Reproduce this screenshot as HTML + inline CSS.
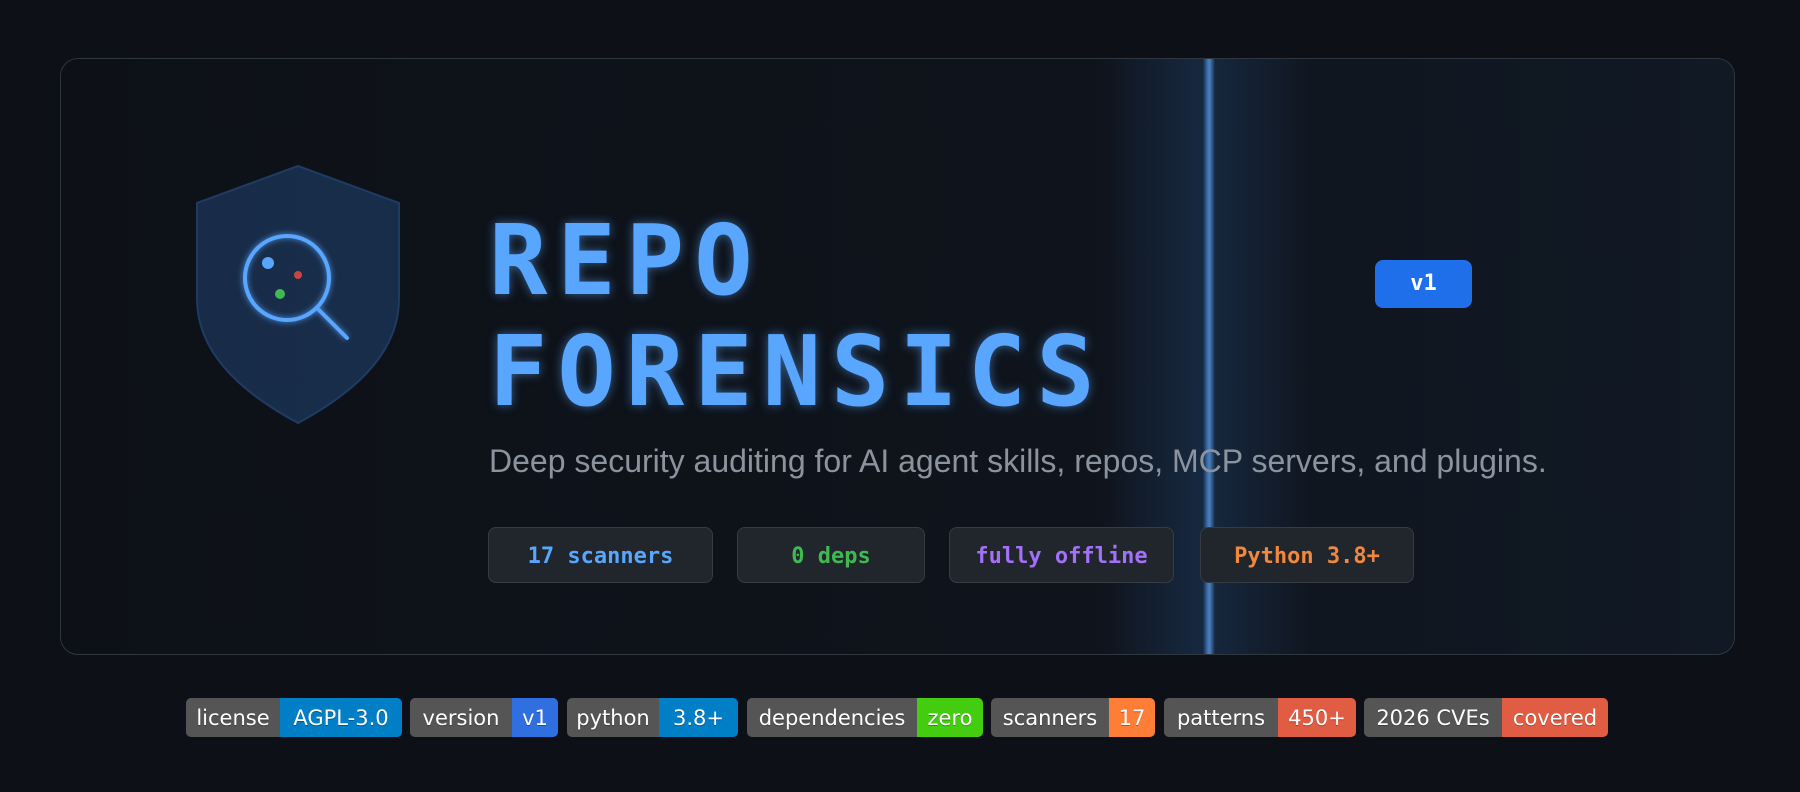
<!DOCTYPE html>
<html><head><meta charset="utf-8">
<style>
html,body{margin:0;padding:0;background:#0d1117;width:1800px;height:792px;overflow:hidden;font-family:"Liberation Sans",sans-serif}
.card{position:absolute;left:60px;top:58px;width:1673px;height:595px;border:1px solid #30363d;border-radius:18px;background:linear-gradient(90deg,#0d1117 0%,#0f141c 60%,#111925 100%);overflow:hidden}
.beam{position:absolute;left:1042px;top:0;width:210px;height:100%;background:linear-gradient(90deg,rgba(30,60,100,0) 0%,rgba(30,60,100,.3) 28%,rgba(30,60,100,.5) 48%,rgba(30,60,100,.3) 68%,rgba(30,60,100,0) 100%)}
.beamc{position:absolute;left:1142px;top:0;width:12px;height:100%;background:linear-gradient(90deg,rgba(70,130,200,0),#3f74b4 40%,#4a80c0 55%,rgba(70,130,200,0))}
.title{position:absolute;left:428px;top:146px;font-family:"DejaVu Sans Mono",monospace;font-weight:bold;font-size:97px;line-height:111px;letter-spacing:10px;color:#58a6ff;text-shadow:0 0 10px rgba(88,166,255,.55)}
.v1{position:absolute;left:1314px;top:201px;width:97px;height:48px;border-radius:8px;background:#1f6feb;color:#fff;font-family:"DejaVu Sans Mono",monospace;font-weight:bold;font-size:22px;line-height:48px;text-align:center}
.sub{position:absolute;left:428px;top:384px;font-size:32px;color:#8b949e;white-space:nowrap}
.pill{position:absolute;top:468px;height:56px;border:1px solid #363c45;border-radius:8px;background:#21262d;font-family:"DejaVu Sans Mono",monospace;font-weight:bold;font-size:22px;line-height:58px;text-align:center;box-sizing:border-box}
.b{position:absolute;top:0;height:39px;border-radius:5px;overflow:hidden;display:flex;font-family:"DejaVu Sans",sans-serif;font-size:21px;color:#fff;line-height:40px;text-shadow:0 1px 0 rgba(0,0,0,.3)}
.b span{display:block;text-align:center}
.l{background:#555}
</style></head><body>
<div class="card">
<div class="beam"></div><div class="beamc"></div>
<svg style="position:absolute;left:0;top:0" width="420" height="420">
<defs><filter id="g"><feGaussianBlur stdDeviation="3"/></filter></defs>
<path d="M237 107 L338 144 L338 240 C338 290 300 330 237 364 C174 330 136 290 136 240 L136 144 Z" fill="#1a3050" stroke="#22406a" stroke-width="2" opacity=".9"/>
<g filter="url(#g)" opacity=".7"><circle cx="226" cy="219" r="42" fill="none" stroke="#58a6ff" stroke-width="5"/><line x1="257" y1="250" x2="286" y2="279" stroke="#58a6ff" stroke-width="5"/></g>
<circle cx="226" cy="219" r="42" fill="none" stroke="#58a6ff" stroke-width="4"/>
<line x1="257" y1="250" x2="286" y2="279" stroke="#58a6ff" stroke-width="4" stroke-linecap="round"/>
<circle cx="207" cy="204" r="6" fill="#58a6ff"/>
<circle cx="237" cy="216" r="4" fill="#c9463e"/>
<circle cx="219" cy="235" r="5" fill="#3fb950"/>
</svg>
<div class="title">REPO<br>FORENSICS</div>
<div class="v1">v1</div>
<div class="sub">Deep security auditing for AI agent skills, repos, MCP servers, and plugins.</div>
<div class="pill" style="left:427px;width:225px;color:#58a6ff">17 scanners</div>
<div class="pill" style="left:676px;width:188px;color:#3fb950">0 deps</div>
<div class="pill" style="left:888px;width:225px;color:#a371f7">fully offline</div>
<div class="pill" style="left:1139px;width:214px;color:#f0883e">Python 3.8+</div>
</div>
<div class="b" style="left:186px;width:216px;top:698px"><span class="l" style="width:94px">license</span><span style="flex:1;background:#007ec6">AGPL-3.0</span></div>
<div class="b" style="left:410px;width:148px;top:698px"><span class="l" style="width:102px">version</span><span style="flex:1;background:#2f6fe0">v1</span></div>
<div class="b" style="left:567px;width:171px;top:698px"><span class="l" style="width:92px">python</span><span style="flex:1;background:#007ec6">3.8+</span></div>
<div class="b" style="left:747px;width:236px;top:698px"><span class="l" style="width:170px">dependencies</span><span style="flex:1;background:#44cc11">zero</span></div>
<div class="b" style="left:991px;width:164px;top:698px"><span class="l" style="width:118px">scanners</span><span style="flex:1;background:#fe7d37">17</span></div>
<div class="b" style="left:1164px;width:192px;top:698px"><span class="l" style="width:114px">patterns</span><span style="flex:1;background:#e05d44">450+</span></div>
<div class="b" style="left:1364px;width:244px;top:698px"><span class="l" style="width:138px">2026 CVEs</span><span style="flex:1;background:#e05d44">covered</span></div>
</body></html>
